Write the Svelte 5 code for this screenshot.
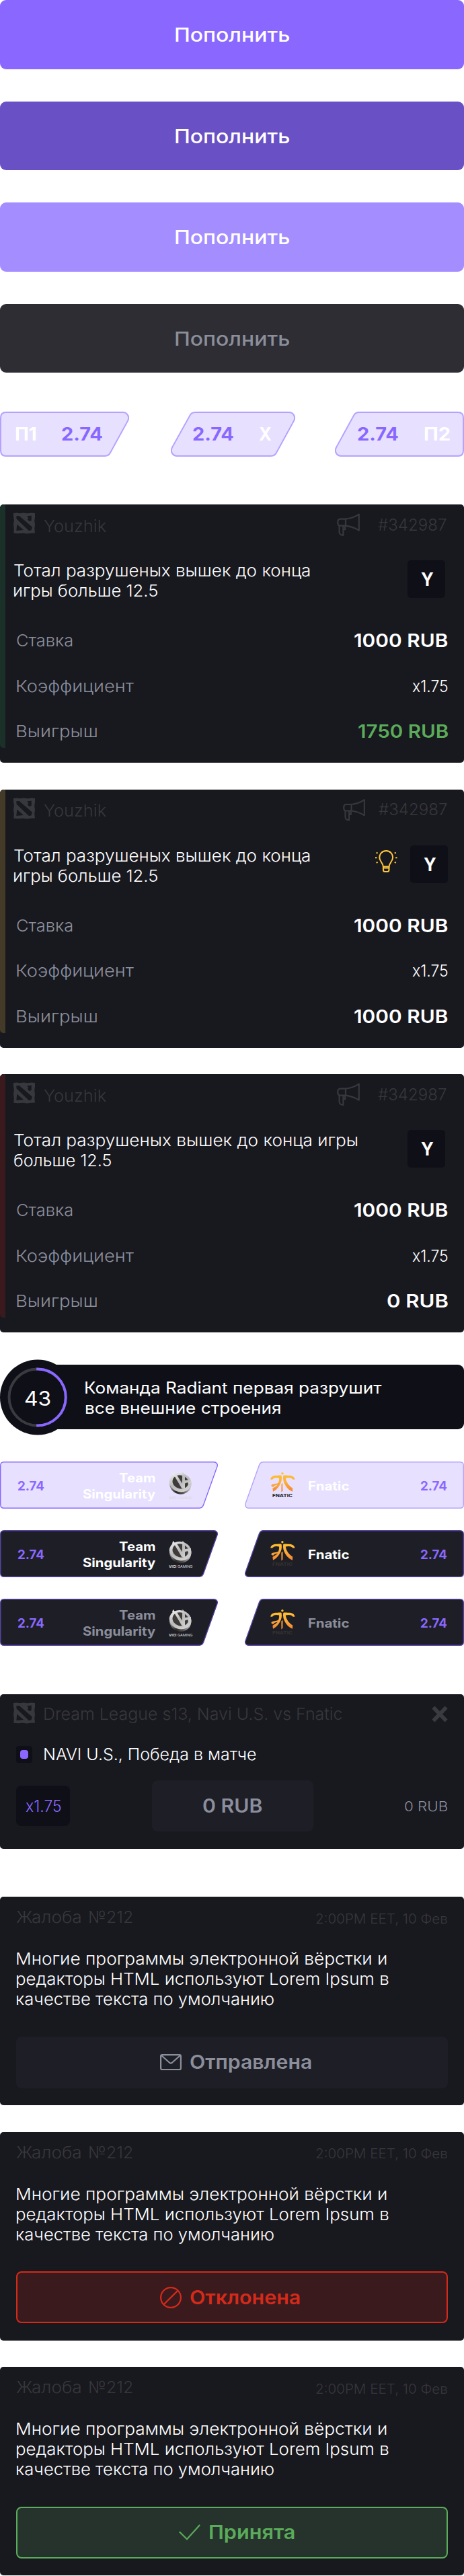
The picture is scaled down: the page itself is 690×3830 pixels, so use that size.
<script>
  const buttons = ['primary', 'pressed', 'hover', 'disabled'];

  const bets = [
    { tone: 'win', lines: [['Тотал разрушеных вышек до конца', 440], ['игры больше 12.5', 213]], prize: ['1750 RUB', 133], tip: false },
    { tone: 'refund', lines: [['Тотал разрушеных вышек до конца', 440], ['игры больше 12.5', 213]], prize: ['1000 RUB', 138], tip: true },
    { tone: 'loss', lines: [['Тотал разрушеных вышек до конца игры', 510], ['больше 12.5', 144]], prize: ['0 RUB', 89.5], tip: false }
  ];

  const teams = ['light', 'dark', 'muted'];

  const complaints = [
    { state: 'sent', label: 'Отправлена', w: 180 },
    { state: 'rejected', label: 'Отклонена', w: 163 },
    { state: 'accepted', label: 'Принята', w: 126 }
  ];

  // Stretches a line of text so that its ink is exactly `width` pixels wide.
  function fit(node, width) {
    const style = getComputedStyle(node);
    const ctx = document.createElement('canvas').getContext('2d');
    ctx.font = `${style.fontWeight} ${style.fontSize} ${style.fontFamily}`;
    const m = ctx.measureText(node.textContent);
    const scale = width / (m.actualBoundingBoxRight + m.actualBoundingBoxLeft);
    const lead = -m.actualBoundingBoxLeft * scale;
    node.style.transform = `scaleX(${scale})`;
    node.style.marginLeft = `${-lead}px`;
    node.style.marginRight = `${width - node.offsetWidth + lead}px`;
  }
</script>

{#snippet t(text, w, cls = '')}
  <span class="slot {cls}"><span class="t" use:fit={w}>{text}</span></span>
{/snippet}

{#snippet dota()}
  <svg class="dota" width="32" height="32" viewBox="0 0 32 32">
    <path
      fill="#37383d"
      fill-rule="evenodd"
      d="M0 1L5 0.5L9 1.2L15 0.4L21 1.3L27 0.6L32 1V7L31.2 12L32 18L31.3 24L32 30.5L26 30.8L20 31.6L14 30.8L7 31.3L0.3 30.8L0.8 24L0 18L0.9 11L0 6ZM4.3 5.3L8.6 5L27.8 21.6L26.5 26.6L22.8 27L4.6 9.6ZM20 5.6L26.8 4.6L26.8 11.8L24 13.2L20.8 10.6L22.4 8.2ZM5.2 17.5L15 26L4.4 27Z"
    />
  </svg>
{/snippet}

{#snippet horn()}
  <svg class="horn" width="34" height="34" viewBox="0 0 34 34" fill="none" stroke="#37383d" stroke-width="2.2" stroke-linejoin="round">
    <path d="M13 8.7H4Q1.2 9.4 1.2 13.6Q1.2 18 4 18.6H13ZM13 8.7Q24 7.5 32.8 1.6V25.6Q24 20 13 18.6" />
    <path d="M3.6 18.8V28Q3.8 32.6 9.4 32.8V19M9.4 24.2H12.2V19" />
  </svg>
{/snippet}

{#snippet bulb()}
  <svg class="bulb" width="33" height="33" viewBox="0 0 33 33" fill="none" stroke="#ffc83d" stroke-width="2">
    <path d="M16.2 1.1C10.3 1.1 6.3 5.4 6.3 11C6.3 16.6 11.4 18.6 11.9 24.5H20.5C21 18.6 26.1 16.6 26.1 11C26.1 5.4 22.1 1.1 16.2 1.1Z" />
    <path d="M11.9 24.5V29.4Q12 32 14.4 32H18Q20.4 32 20.5 29.4V24.5M12 26.5H20.5" />
    <path d="M0 11.2H2.4M30.2 11.2H32.6M1.6 3.7L3.6 4.7M30.8 3.7L28.8 4.7M1.6 18.9L3.6 17.9M30.8 18.9L28.8 17.9" />
  </svg>
{/snippet}

{#snippet vici()}
  <svg class="vici" width="36" height="42" viewBox="0 0 36 42">
    <defs>
      <linearGradient id="silver" x1="0" y1="0" x2="1" y2="1">
        <stop offset="0" stop-color="#f4f4f4" />
        <stop offset="0.5" stop-color="#b9b9b9" />
        <stop offset="1" stop-color="#dcdcdc" />
      </linearGradient>
      <linearGradient id="rim" x1="0" y1="0" x2="1" y2="0">
        <stop offset="0" stop-color="#a6a6a6" />
        <stop offset="0.4" stop-color="#2e2927" />
        <stop offset="0.7" stop-color="#514c4a" />
        <stop offset="1" stop-color="#bdbdbd" />
      </linearGradient>
    </defs>
    <ellipse cx="17.2" cy="18.8" rx="16.2" ry="14.8" fill="url(#rim)" transform="rotate(15 17.2 18.8)" />
    <ellipse cx="17.2" cy="16.2" rx="16.6" ry="14" fill="url(#silver)" transform="rotate(15 17.2 16.2)" />
    <ellipse cx="17.4" cy="15.4" rx="12" ry="10" fill="#3f3b3a" transform="rotate(15 17.4 15.4)" />
    <path fill="url(#silver)" d="M5 5L6.4 0.8L8.4 3.6L12 5L19.8 17.5L20.2 4.4L20.6 0.8L23.4 4.2L27.6 7.2L24 8.2V13L33 12V17.5L29.5 19.5L28 16L24 17.5V25.5L19.4 25L9.2 7.8Z" />
    <text x="0" y="40.8" textLength="35.5" lengthAdjust="spacingAndGlyphs"><tspan font-weight="700">VICI</tspan> GAMING</text>
  </svg>
{/snippet}

{#snippet fnatic()}
  <svg class="fnatic" width="37" height="38" viewBox="0 0 37 38">
    <defs>
      <linearGradient id="flame" gradientUnits="userSpaceOnUse" x1="0" y1="2" x2="0" y2="30">
        <stop offset="0" stop-color="#ffc02e" />
        <stop offset="0.45" stop-color="#fdb03a" />
        <stop offset="1" stop-color="#f5812f" />
      </linearGradient>
    </defs>
    <g fill="url(#flame)">
      <circle cx="17.9" cy="1.8" r="1.7" />
      <path d="M0.2 10.6C0.8 6.4 5 4.8 9 4.8C13 4.8 15.6 4.2 16.6 5C17.6 10 16.6 15 13.6 19.4C11 23.2 9 26 4 28.8L3.4 24C7 21.8 9.6 20 11 18.6C8 19.2 6 19.6 4.4 21.8C2.6 21.6 1.2 20.6 1.4 19.2C4 16.6 8.4 17.6 11.8 15.8C13.4 12.6 13.2 10 13 8.6C9 7.4 5.6 7.6 3.6 10.2C2.4 11 1.2 11 0.2 10.6Z" />
      <path d="M36.4 10.6C35.8 6.4 31.6 4.8 27.6 4.8C23.6 4.8 20.4 4.2 19.2 5C18.4 10 19.6 15 22.4 19.4C25 23.2 27 26 33 28.8L33.2 23.6C28 20.6 23.4 14.6 22.8 8.6C27 7.4 31 7.6 33 10.2C34 11 35.4 11 36.4 10.6Z" />
      <path d="M16.4 17.4L18.4 15.8V27.6L16.4 29.4Z" />
    </g>
    <text x="3" y="36.8" textLength="30" lengthAdjust="spacingAndGlyphs">FNATIC</text>
  </svg>
{/snippet}

<main>
  <section class="buttons">
    {#each buttons as kind}
      <button class="btn {kind}">{@render t('Пополнить', 169)}</button>
    {/each}
  </section>

  <section class="odds">
    <div class="odd first">
      <svg class="shape" width="192" height="67" viewBox="0 0 192 67">
        <path d="M9 1H182.5C189 1 193 7.2 190.2 13.4L164.3 60.6C162.6 64.4 159.5 66 155.8 66H9Q1 66 1 58V9Q1 1 9 1Z" />
      </svg>
      {@render t('П1', 30, 'side')}
      {@render t('2.74', 60.5, 'rate')}
    </div>
    <div class="odd draw">
      <svg class="shape" width="185" height="67" viewBox="0 0 185 67">
        <path d="M37 1H175.5C182 1 186 7.2 183.2 13.4L157.3 60.6C155.6 64.4 152.5 66 148.8 66H9.5C3 66 -1 59.8 1.8 53.6L28 6.4C29.4 2.6 33 1 37 1Z" />
      </svg>
      {@render t('2.74', 60.5, 'rate')}
      {@render t('X', 19, 'side')}
    </div>
    <div class="odd second">
      <svg class="shape flip" width="192" height="67" viewBox="0 0 192 67">
        <path d="M9 1H182.5C189 1 193 7.2 190.2 13.4L164.3 60.6C162.6 64.4 159.5 66 155.8 66H9Q1 66 1 58V9Q1 1 9 1Z" />
      </svg>
      {@render t('2.74', 60.5, 'rate')}
      {@render t('П2', 38, 'side')}
    </div>
  </section>

  <section class="bets">
    {#each bets as bet}
      <article class="bet {bet.tone}">
        <header>
          {@render dota()}
          {@render t('Youzhik', 93.5, 'name')}
          {@render horn()}
          {@render t('#342987', 102, 'id')}
        </header>
        <div class="event">
          <div class="title">
            {#each bet.lines as [line, w]}
              <div>{@render t(line, w)}</div>
            {/each}
          </div>
          {#if bet.tip}{@render bulb()}{/if}
          <div class="pick">{@render t('Y', 19)}</div>
        </div>
        <div class="row">{@render t('Ставка', 83)}{@render t('1000 RUB', 138, 'sum')}</div>
        <div class="row">{@render t('Коэффициент', 174)}{@render t('x1.75', 52.5, 'coef')}</div>
        <div class="row">{@render t('Выигрыш', 119)}{@render t(bet.prize[0], bet.prize[1], 'sum prize')}</div>
      </article>
    {/each}
  </section>

  <section class="timer">
    <div class="dial">
      <svg class="ring" width="112" height="113" viewBox="0 0 112 113" fill="none" stroke-width="4">
        <circle cx="56" cy="56.5" r="56" fill="#0e0f17" />
        <path stroke="#3a3b40" d="M55.5 14.5A42 42 0 0 0 55.5 98.5" />
        <path stroke="#8a68ff" d="M54.2 14.5H55.8A42 42 0 0 1 55.8 98.5H54.2" />
      </svg>
      {@render t('43', 37.5)}
    </div>
    <div class="message">
      <div>{@render t('Команда Radiant первая разрушит', 440)}</div>
      <div>{@render t('все внешние строения', 290)}</div>
    </div>
  </section>

  <section class="teams">
    {#each teams as tone}
      <div class="match {tone}">
        <div class="team home">
          <svg class="shape" width="324" height="70" viewBox="0 0 324 70">
            <path d="M6 0.7H318C321.8 0.7 324.2 3.8 323 7.4L302.6 64.6C301.4 67.8 299.6 69.3 296.4 69.3H6Q0.7 69.3 0.7 64V6Q0.7 0.7 6 0.7Z" />
          </svg>
          {@render t('2.74', 39.5, 'rate')}
          <div class="club">
            <div>{@render t('Team', 53.5)}</div>
            <div>{@render t('Singularity', 108)}</div>
          </div>
          {@render vici()}
        </div>
        <div class="team away">
          <svg class="shape flip" width="326" height="70" viewBox="0 0 326 70">
            <path d="M6 0.7H320C323.8 0.7 326.2 3.8 325 7.4L304.6 64.6C303.4 67.8 301.6 69.3 298.4 69.3H6Q0.7 69.3 0.7 64V6Q0.7 0.7 6 0.7Z" />
          </svg>
          {@render fnatic()}
          {@render t('Fnatic', 60.5, 'club')}
          {@render t('2.74', 39.5, 'rate')}
        </div>
      </div>
    {/each}
  </section>

  <article class="slip">
    <header>
      {@render dota()}
      {@render t('Dream League s13, Navi U.S. vs Fnatic', 443, 'league')}
      <svg class="close" width="24" height="25" viewBox="0 0 24 25"><path d="M2.4 2.6L21.6 22.4M21.6 2.6L2.4 22.4" stroke="#3a3b40" stroke-width="5.8" /></svg>
    </header>
    <div class="choice">
      <span class="check"><i></i></span>
      {@render t('NAVI U.S., Победа в матче', 314.5)}
    </div>
    <div class="stake">
      <div class="mult">{@render t('x1.75', 52.5)}</div>
      <div class="input">{@render t('0 RUB', 88)}</div>
      {@render t('0 RUB', 63, 'total')}
    </div>
  </article>

  <section class="complaints">
    {#each complaints as c}
      <article class="complaint {c.state}">
        <header>
          {@render t('Жалоба', 96.5)}
          {@render t('№212', 63.5)}
          {@render t('2:00PM EET, 10 Фев', 195.5, 'date')}
        </header>
        <div class="body">
          <div>{@render t('Многие программы электронной вёрстки и', 549)}</div>
          <div>{@render t('редакторы HTML используют Lorem Ipsum в', 553)}</div>
          <div>{@render t('качестве текста по умолчанию', 382)}</div>
        </div>
        <div class="status">
          <svg width="32" height="32" viewBox="0 0 32 32" fill="none" stroke="currentColor" stroke-width="2.2">
            {#if c.state === 'sent'}
              <rect x="1.1" y="5.2" width="29.8" height="21.8" rx="2" />
              <path d="M2 6L14.6 17.2Q16 18.2 17.4 17.2L30 6" />
            {:else if c.state === 'rejected'}
              <circle cx="16" cy="16" r="14.9" />
              <path d="M5.8 26L26.4 5.6" />
            {:else}
              <path d="M0.8 15.2L12 26.2L31.2 5" />
            {/if}
          </svg>
          {@render t(c.label, c.w)}
        </div>
      </article>
    {/each}
  </section>
</main>

<style>
  :global(body) { background: #fff; }

  main {
    width: 690px;
    height: 3830px;
    overflow: hidden;
    display: flex;
    flex-direction: column;
    font-family: Inter, sans-serif;
    font-size: 24px;
    font-weight: 300;
    line-height: 30px;
    color: #fff;
  }
  section, article { flex: none; box-sizing: border-box; }
  svg { display: block; flex: none; }

  .slot { display: flex; flex: none; }
  .t {
    display: block;
    flex: none;
    white-space: nowrap;
    transform-origin: left center;
    translate: 0 1px;
  }
  .odds .t, .sum .t, .input .t, .status .t, .pick .t, .away .club .t { translate: none; }

  .buttons { display: flex; flex-direction: column; gap: 48px; }
  .btn {
    height: 102.5px;
    padding: 0 0 0 2px;
    border: 0;
    border-radius: 9px;
    display: flex;
    align-items: center;
    justify-content: center;
    font: 500 28px/34px Inter, sans-serif;
    color: #fff;
  }
  .primary { background: #8a68ff; }
  .pressed { background: #6950c5; }
  .hover { background: #a48dff; }
  .disabled { background: #2d2d33; color: #8b8e9b; }

  .odds {
    margin-top: 58px;
    height: 67px;
    display: flex;
    justify-content: space-between;
    font-size: 27px;
    font-weight: 700;
  }
  .odd { position: relative; display: flex; align-items: center; justify-content: space-between; box-sizing: border-box; }
  .first { width: 192px; padding: 0 40px 0 23px; }
  .draw { width: 185px; padding: 0 35px 0 33.5px; margin-left: 3px; }
  .second { width: 192px; padding: 0 21px 0 34px; }
  .shape { position: absolute; left: 0; top: 0; z-index: -1; }
  .flip { transform: rotate(180deg); }
  .odd, .team { z-index: 0; }
  .odd .shape path { fill: #e7e0ff; stroke: #b5a2ff; stroke-width: 2; }
  .rate { color: #8a68ff; }

  .bets { margin-top: 71px; display: flex; flex-direction: column; gap: 39.5px; }
  .bet {
    position: relative;
    height: 384px;
    padding: 0 24.5px 0 20px;
    border-radius: 5px;
    background: #18181f;
    overflow: hidden;
  }
  .bet::before {
    content: '';
    position: absolute;
    left: 0;
    top: 0;
    width: 8px;
    height: 362px;
    border-radius: 5px 0 0 5px;
    background: #1b3029;
  }
  .refund::before { background: #433a27; }
  .loss::before { background: #3b1a1e; }
  .bet header { height: 56px; display: flex; align-items: center; color: #36373b; }
  .name { margin-top: 7px; }
  .dota { margin-right: 12.5px; }
  .horn { margin: 4px 26.5px 0 auto; }
  .id { margin-top: 3px; }
  .bet:not(.refund) header { padding-right: 1.8px; }
  .refund .horn { margin-right: 20.5px; width: 33px; }
  .event { margin-top: 27px; height: 60px; display: flex; }
  .title { flex: 1; padding-left: 1px; }
  .title div, .message div, .body div { height: 30px; display: flex; }
  .pick {
    width: 56px;
    height: 56px;
    border-radius: 5px;
    background: #0e0f17;
    margin-right: 3.5px;
    display: flex;
    align-items: center;
    justify-content: center;
    font-size: 27px;
    font-weight: 700;
    padding: 2px 0 0 3px;
    box-sizing: border-box;
  }
  .refund .pick { margin-right: 0; }
  .bulb { margin: 7px 19px 0 0; }
  .row {
    height: 67.5px;
    padding-left: 5.5px;
    display: flex;
    align-items: center;
    justify-content: space-between;
    color: #8b8e9b;
  }
  .event + .row { margin-top: 25.5px; }
  .sum { font-size: 27.5px; font-weight: 600; color: #fff; }
  .coef { color: #fff; }
  .win .prize { color: #5aab5a; }

  .timer { margin-top: 39.5px; height: 113px; display: flex; align-items: center; }
  .dial {
    position: relative;
    z-index: 1;
    width: 112px;
    height: 113px;
    display: flex;
    align-items: center;
    justify-content: center;
    font-size: 30px;
    font-weight: 400;
    padding-top: 2px;
    box-sizing: border-box;
  }
  .ring { position: absolute; left: 0; top: 0; z-index: -1; }
  .message {
    flex: 1;
    height: 96px;
    margin-left: -56px;
    padding: 18.5px 0 0 71.5px;
    border-radius: 0 9px 9px 0;
    box-sizing: border-box;
    background: #0e0f17;
    font-weight: 400;
  }

  .teams { margin-top: 39.5px; display: flex; flex-direction: column; gap: 32.2px; font-size: 18.5px; font-weight: 700; line-height: 24.5px; }
  .match { height: 70px; display: flex; justify-content: space-between; }
  .team { position: relative; display: flex; align-items: center; box-sizing: border-box; }
  .home { width: 324px; padding-left: 26px; }
  .away { width: 326px; padding: 0 26px 0 37.5px; }
  .home .club { margin-left: auto; }
  .home .club div { display: flex; justify-content: flex-end; height: 24.5px; }
  .vici { margin: 2px 37px 0 20.5px; }
  .away .club { margin-left: 20.5px; margin-top: 2px; }
  .away .rate { margin-left: auto; }
  .match .shape path { fill: #1e1e26; stroke: #5644a4; stroke-width: 1.4; }
  .light .shape path { fill: #e7e0ff; stroke: #b5a2ff; }
  .light .home .shape path { stroke: #8a68ff; }
  .muted .club { color: #8b8e9b; }
  .vici text { font: 400 5.4px Inter, sans-serif; fill: #d9d9d9; }
  .fnatic text { font: 800 6.8px Inter, sans-serif; fill: #33302f; }

  .slip { margin-top: 71.5px; height: 229.7px; padding: 0 24px; border-radius: 5px; background: #18181f; }
  .slip header { height: 57px; margin-left: -4px; display: flex; align-items: center; color: #36373b; }
  .league { margin: 1px 0 0 1.5px; }
  .close { margin: 2px 0 0 auto; }
  .choice { height: 25px; margin-top: 20px; display: flex; align-items: center; gap: 18px; }
  .check { width: 24px; height: 25px; border-radius: 4px; background: #0e0f17; display: flex; align-items: center; justify-content: center; }
  .check i { width: 12px; height: 13px; border-radius: 4px; background: #8a68ff; }
  .stake { margin-top: 26px; height: 76px; display: flex; align-items: center; }
  .mult, .input { display: flex; align-items: center; justify-content: center; border-radius: 8px; }
  .mult { width: 80px; height: 60px; background: #0e0f17; color: #8a68ff; }
  .input { width: 240px; height: 76px; margin-left: 122px; background: #1e1e26; color: #8b8e9b; font-size: 28px; font-weight: 600; }
  .total { margin: 0 0.5px 0 auto; font-size: 20px; color: #8b8e9b; }

  .complaints { margin-top: 71.6px; display: flex; flex-direction: column; gap: 39.2px; }
  .complaint { height: 310.3px; padding: 15px 24px 0; border-radius: 5px; background: #18181f; }
  .complaint header { height: 30px; padding-right: 0.5px; display: flex; align-items: center; gap: 12.5px; color: #36373b; }
  .date { margin: 3px 0 0 auto; font-size: 20px; }
  .body { margin: 32px 0 0 1px; }
  .status {
    margin-top: 40.5px;
    height: 77px;
    border-radius: 8px;
    box-sizing: border-box;
    display: flex;
    align-items: center;
    gap: 13px;
    padding-left: 214px;
    background: #1e1e26;
    color: #8b8e9b;
    font-size: 28px;
    font-weight: 600;
  }
  .rejected .status { background: #3b1a1e; color: #d42a1a; border: 2px solid; padding-left: 212px; }
  .accepted .status { background: #26332c; color: #5aab5a; border: 2px solid; padding-left: 240px; gap: 14px; }
</style>
